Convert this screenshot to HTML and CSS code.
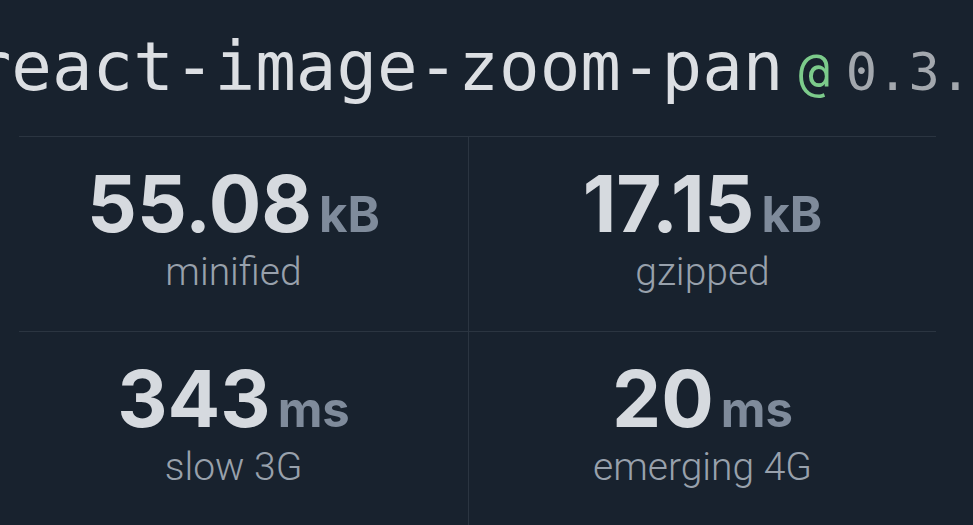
FILE: index.html
```html
<!DOCTYPE html>
<html lang="en">
<head>
<meta charset="utf-8">
<title>react-image-zoom-pan@0.3.1</title>
<link rel="stylesheet" href="styles.css">
</head>
<body>
<main class="page">
  <h1 class="title">
    <span class="pkg-name">react-image-zoom-pan</span><span class="pkg-at">@</span><span class="pkg-version">0.3.1</span>
  </h1>
  <section class="stats">
    <div class="stat stat-left">
      <div class="stat-value"><span class="num">55.08</span><span class="unit">kB</span></div>
      <div class="stat-label">minified</div>
    </div>
    <div class="stat stat-right">
      <div class="stat-value"><span class="num">17.15</span><span class="unit">kB</span></div>
      <div class="stat-label">gzipped</div>
    </div>
    <div class="stat stat-left">
      <div class="stat-value"><span class="num">343</span><span class="unit">ms</span></div>
      <div class="stat-label">slow 3G</div>
    </div>
    <div class="stat stat-right">
      <div class="stat-value"><span class="num">20</span><span class="unit">ms</span></div>
      <div class="stat-label">emerging 4G</div>
    </div>
  </section>
</main>
</body>
</html>
```
FILE: styles.css
```css
html, body {
  margin: 0;
  padding: 0;
  background: #18222e;
  overflow: hidden;
}
.page {
  width: 973px;
  height: 525px;
  overflow: hidden;
  background: #18222e;
}
.title {
  margin: 0;
  height: 136px;
  box-sizing: border-box;
  padding-top: 33px;
  display: flex;
  justify-content: center;
  align-items: baseline;
  white-space: nowrap;
  font-family: "DejaVu Sans Mono", "Liberation Mono", monospace;
  font-weight: 400;
  line-height: 1;
}
.pkg-name {
  font-size: 67.5px;
  color: #dcdfe3;
}
.pkg-at {
  font-size: 52px;
  color: #7ccb8b;
  margin: 0 16px 0 15px;
}
.pkg-version {
  font-size: 52px;
  color: #a3a8ae;
}
.stats {
  display: grid;
  grid-template-columns: 449px 468px;
  margin-left: 19px;
}
.stat {
  border-top: 1px solid #2b3541;
  text-align: center;
  height: 195px;
  box-sizing: border-box;
  padding-top: 28px;
  font-family: Inter, "Noto Sans", sans-serif;
}
.stat-left {
  padding-right: 20px;
}
.stat-right {
  border-left: 1px solid #2b3541;
}
.stat-value {
  line-height: 78px;
  height: 78px;
  white-space: nowrap;
}
.num {
  font-size: 78px;
  font-weight: 700;
  color: #d6dadf;
  letter-spacing: 0;
}
.unit {
  font-size: 49px;
  font-weight: 700;
  color: #7f8b9b;
  margin-left: 7px;
}
.stat-label {
  margin-top: 9px;
  font-family: Roboto, Inter, sans-serif;
  font-size: 39px;
  line-height: 40px;
  font-weight: 300;
  color: #98a1ac;
}
```
